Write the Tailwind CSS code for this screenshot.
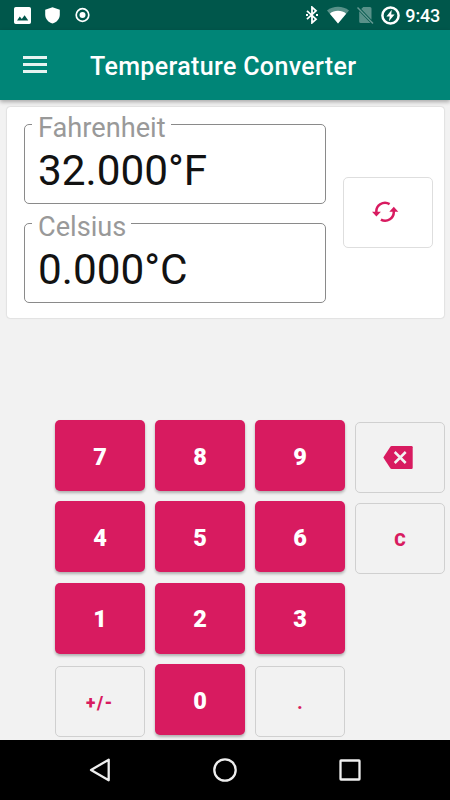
<!DOCTYPE html>
<html lang="en">
<head>
  <meta charset="UTF-8" />
  <meta name="viewport" content="width=device-width, initial-scale=1.0" />
  <title>Temperature Converter</title>
  <script src="https://cdn.jsdelivr.net/npm/@tailwindcss/browser@4"></script>
</head>
<body class="w-[450px] h-[800px] overflow-hidden flex flex-col bg-[#f2f2f2] font-[Roboto,sans-serif]">

  <!-- status bar -->
  <div class="h-[30px] shrink-0 bg-[#00574b] text-white flex items-center justify-between pl-[14px] pr-[10px]">
    <div class="flex items-center gap-[14px]">
      <svg class="w-[17px] h-[17px]" viewBox="0 0 17 17"><path fill="#fff" fill-rule="evenodd" d="M1.8 0h13.4A1.8 1.8 0 0 1 17 1.8v13.4a1.8 1.8 0 0 1-1.8 1.8H1.8A1.8 1.8 0 0 1 0 15.2V1.8A1.8 1.8 0 0 1 1.8 0zM3 13.5h11.3L10.6 8.3 7.8 12 5.8 9.6z"/></svg>
      <svg class="w-[15px] h-[17px]" viewBox="0 0 15 17"><path fill="#fff" d="M7.5.3L14.8 2.8V7.5C14.8 12 11.5 15.5 7.5 16.5 3.5 15.5.2 12 .2 7.5V2.8z"/></svg>
      <svg class="w-[16px] h-[16px]" viewBox="0 0 16 16"><circle cx="8.5" cy="8" r="6.3" fill="none" stroke="#fff" stroke-width="1.7"/><circle cx="8.5" cy="8" r="3" fill="#fff"/></svg>
    </div>
    <div class="flex items-center">
      <svg class="w-[12px] h-[18px] mr-[9px]" viewBox="0 0 12 18"><path fill="none" stroke="#fff" stroke-width="1.8" d="M1 4.8L10 13.2 6 16.8V1.2L10 4.8 1 13.2"/><path fill="#fff" d="M0 8h2v2H0zM10 8h2v2h-2z"/></svg>
      <svg class="w-[22px] h-[18px] mr-[8px]" viewBox="0 0 23 18"><path fill="#fff" fill-opacity=".35" d="M0 4.2C6.5-1 16.5-1 23 4.2L11.5 17.8z"/><path fill="#fff" d="M3 7.6C7.5 3.6 15.500 3.6 20 7.6L11.5 17.8z"/></svg>
      <svg class="w-[17px] h-[18px] mr-[7px]" viewBox="0 0 17 18"><path fill="#fff" fill-opacity=".35" d="M6.3 1H13a1.500 1.500 0 0 1 1.500 1.500V13.800L4.200 3.100zM2.200 5.200L13.500 17H3.700a1.500 1.500 0 0 1-1.500-1.500z"/><path stroke="#fff" stroke-opacity=".4" stroke-width="1.400" d="M.5 1.500L16 17.500"/></svg>
      <svg class="w-[19px] h-[19px] mr-[5px]" viewBox="0 0 19 19"><circle cx="9.5" cy="9.5" r="8.1" fill="none" stroke="#fff" stroke-width="2.5"/><path fill="#fff" d="M10.8 3.8L5.4 10.4h3.3L7.9 15.2 13.6 8.5h-3.4z"/></svg>
      <span class="text-[18px] leading-[30px] mt-px font-medium tracking-[-0.2px]">9:43</span>
    </div>
  </div>

  <!-- app bar -->
  <header class="relative h-[70px] shrink-0 bg-[#008577] flex items-center pl-[23px] shadow-[0_2px_4px_rgba(0,0,0,0.3)]">
    <div class="w-6 flex flex-col gap-1 mt-[-1px]">
      <span class="h-[3px] bg-white/90"></span>
      <span class="h-[3px] bg-white/90"></span>
      <span class="h-[3px] bg-white/90"></span>
    </div>
    <h1 class="ml-[43px] mt-[2px] text-[25px] leading-none font-medium tracking-[0.35px] text-white whitespace-nowrap">Temperature Converter</h1>
  </header>

  <!-- converter card -->
  <section class="h-[211px] shrink-0 mx-[6.5px] mt-[6.5px] pl-[17.5px] pr-[11px] bg-white rounded-[3px] shadow-[0_0_1.5px_rgba(0,0,0,0.3)] flex justify-between items-center">
    <div class="flex flex-col gap-[19px] mt-[3px]">
      <div class="relative w-[302px] h-[80px] border border-[#8a8a8a] rounded-[5px] pl-[13px] flex items-center">
        <label class="absolute left-[7px] top-[-13px] pl-[6px] pr-[5px] h-[28px] bg-white text-[27.2px] leading-[32px] text-[#999]">Fahrenheit</label>
        <span class="mt-[14px] text-[42.3px] leading-none text-[#121212]">32.000°F</span>
      </div>
      <div class="relative w-[302px] h-[80px] border border-[#8a8a8a] rounded-[5px] pl-[13px] flex items-center">
        <label class="absolute left-[7px] top-[-13px] pl-[6px] pr-[5px] h-[28px] bg-white text-[27.2px] leading-[32px] text-[#999]">Celsius</label>
        <span class="mt-[14px] text-[42.3px] leading-none text-[#121212]">0.000°C</span>
      </div>
    </div>
    <button class="w-[90px] h-[71px] border border-[#dedede] rounded-[5px] flex items-center justify-center" aria-label="Swap">
      <svg class="w-7 h-[22px] mr-[6px]" viewBox="0 0 28 22">
        <path fill="none" stroke="#d81b60" stroke-width="2.5" d="M5.5 12A8.7 8.7 0 0 1 18.6 3.1M9.9 18.6A8.7 8.7 0 0 0 22.7 10"/>
        <path fill="#d81b60" d="M1 10.7h8.9l-4.5 4.8zM18.3 10.7h9l-4.5-5z"/>
      </svg>
    </button>
  </section>

  <!-- keypad -->
  <main class="flex-1 pt-[102.5px] pl-[55px] grid grid-cols-[repeat(4,90px)] auto-rows-[71px] gap-x-[10px] gap-y-[10.3px] content-start text-[23.5px] font-black">
    <button class="bg-[#d81b60] text-white rounded-[5px] pt-[4px] shadow-[0_2px_3px_rgba(0,0,0,0.28)]">7</button>
    <button class="bg-[#d81b60] text-white rounded-[5px] pt-[4px] shadow-[0_2px_3px_rgba(0,0,0,0.28)]">8</button>
    <button class="bg-[#d81b60] text-white rounded-[5px] pt-[4px] shadow-[0_2px_3px_rgba(0,0,0,0.28)]">9</button>
    <button class="mt-[2px] mb-[-2px] border border-[#d0d0d0] rounded-[5px] flex items-center justify-center" aria-label="Backspace">
      <svg class="w-[30px] h-[23px] mr-[5px]" viewBox="0 0 30 23">
        <path fill="#d81b60" d="M8.5 0H28.5a1.2 1.2 0 0 1 1.2 1.2V21.8a1.2 1.2 0 0 1-1.2 1.2H8.5L7.5 22.5.3 11.5 7.5.5z"/>
        <path stroke="#f2f2f2" stroke-width="2.5" d="M11.7 6L22.7 17M22.7 6L11.7 17"/>
      </svg>
    </button>

    <button class="bg-[#d81b60] text-white rounded-[5px] pt-[4px] shadow-[0_2px_3px_rgba(0,0,0,0.28)]">4</button>
    <button class="bg-[#d81b60] text-white rounded-[5px] pt-[4px] shadow-[0_2px_3px_rgba(0,0,0,0.28)]">5</button>
    <button class="bg-[#d81b60] text-white rounded-[5px] pt-[4px] shadow-[0_2px_3px_rgba(0,0,0,0.28)]">6</button>
    <button class="mt-[2px] mb-[-2px] border border-[#d0d0d0] rounded-[5px] text-[#d81b60] text-[17.5px] pt-[3px]">C</button>

    <button class="bg-[#d81b60] text-white rounded-[5px] pt-[4px] shadow-[0_2px_3px_rgba(0,0,0,0.28)]">1</button>
    <button class="bg-[#d81b60] text-white rounded-[5px] pt-[4px] shadow-[0_2px_3px_rgba(0,0,0,0.28)]">2</button>
    <button class="bg-[#d81b60] text-white rounded-[5px] pt-[4px] shadow-[0_2px_3px_rgba(0,0,0,0.28)]">3</button>
    <div></div>

    <button class="mt-[2px] mb-[-2px] border border-[#d0d0d0] rounded-[5px] text-[#d81b60] text-[17.5px] pt-[3px] tracking-[1.5px]">+/-</button>
    <button class="bg-[#d81b60] text-white rounded-[5px] pt-[4px] shadow-[0_2px_3px_rgba(0,0,0,0.28)]">0</button>
    <button class="mt-[2px] mb-[-2px] border border-[#d0d0d0] rounded-[5px] text-[#d81b60] text-[17.5px] pt-[3px]">.</button>
  </main>

  <!-- navigation bar -->
  <nav class="h-[60px] shrink-0 bg-black flex items-center justify-between px-[88px]">
    <svg class="w-6 h-6" viewBox="0 0 24 24"><path fill="none" stroke="#eee" stroke-width="2.3" stroke-linejoin="round" d="M3 12L20.7 1.7V22.3z"/></svg>
    <svg class="w-6 h-6" viewBox="0 0 24 24"><circle cx="12" cy="12" r="10.7" fill="none" stroke="#eee" stroke-width="2.3"/></svg>
    <svg class="w-6 h-6" viewBox="0 0 24 24"><rect x="2.5" y="2.5" width="19" height="19" rx=".5" fill="none" stroke="#eee" stroke-width="2.3"/></svg>
  </nav>

</body>
</html>
